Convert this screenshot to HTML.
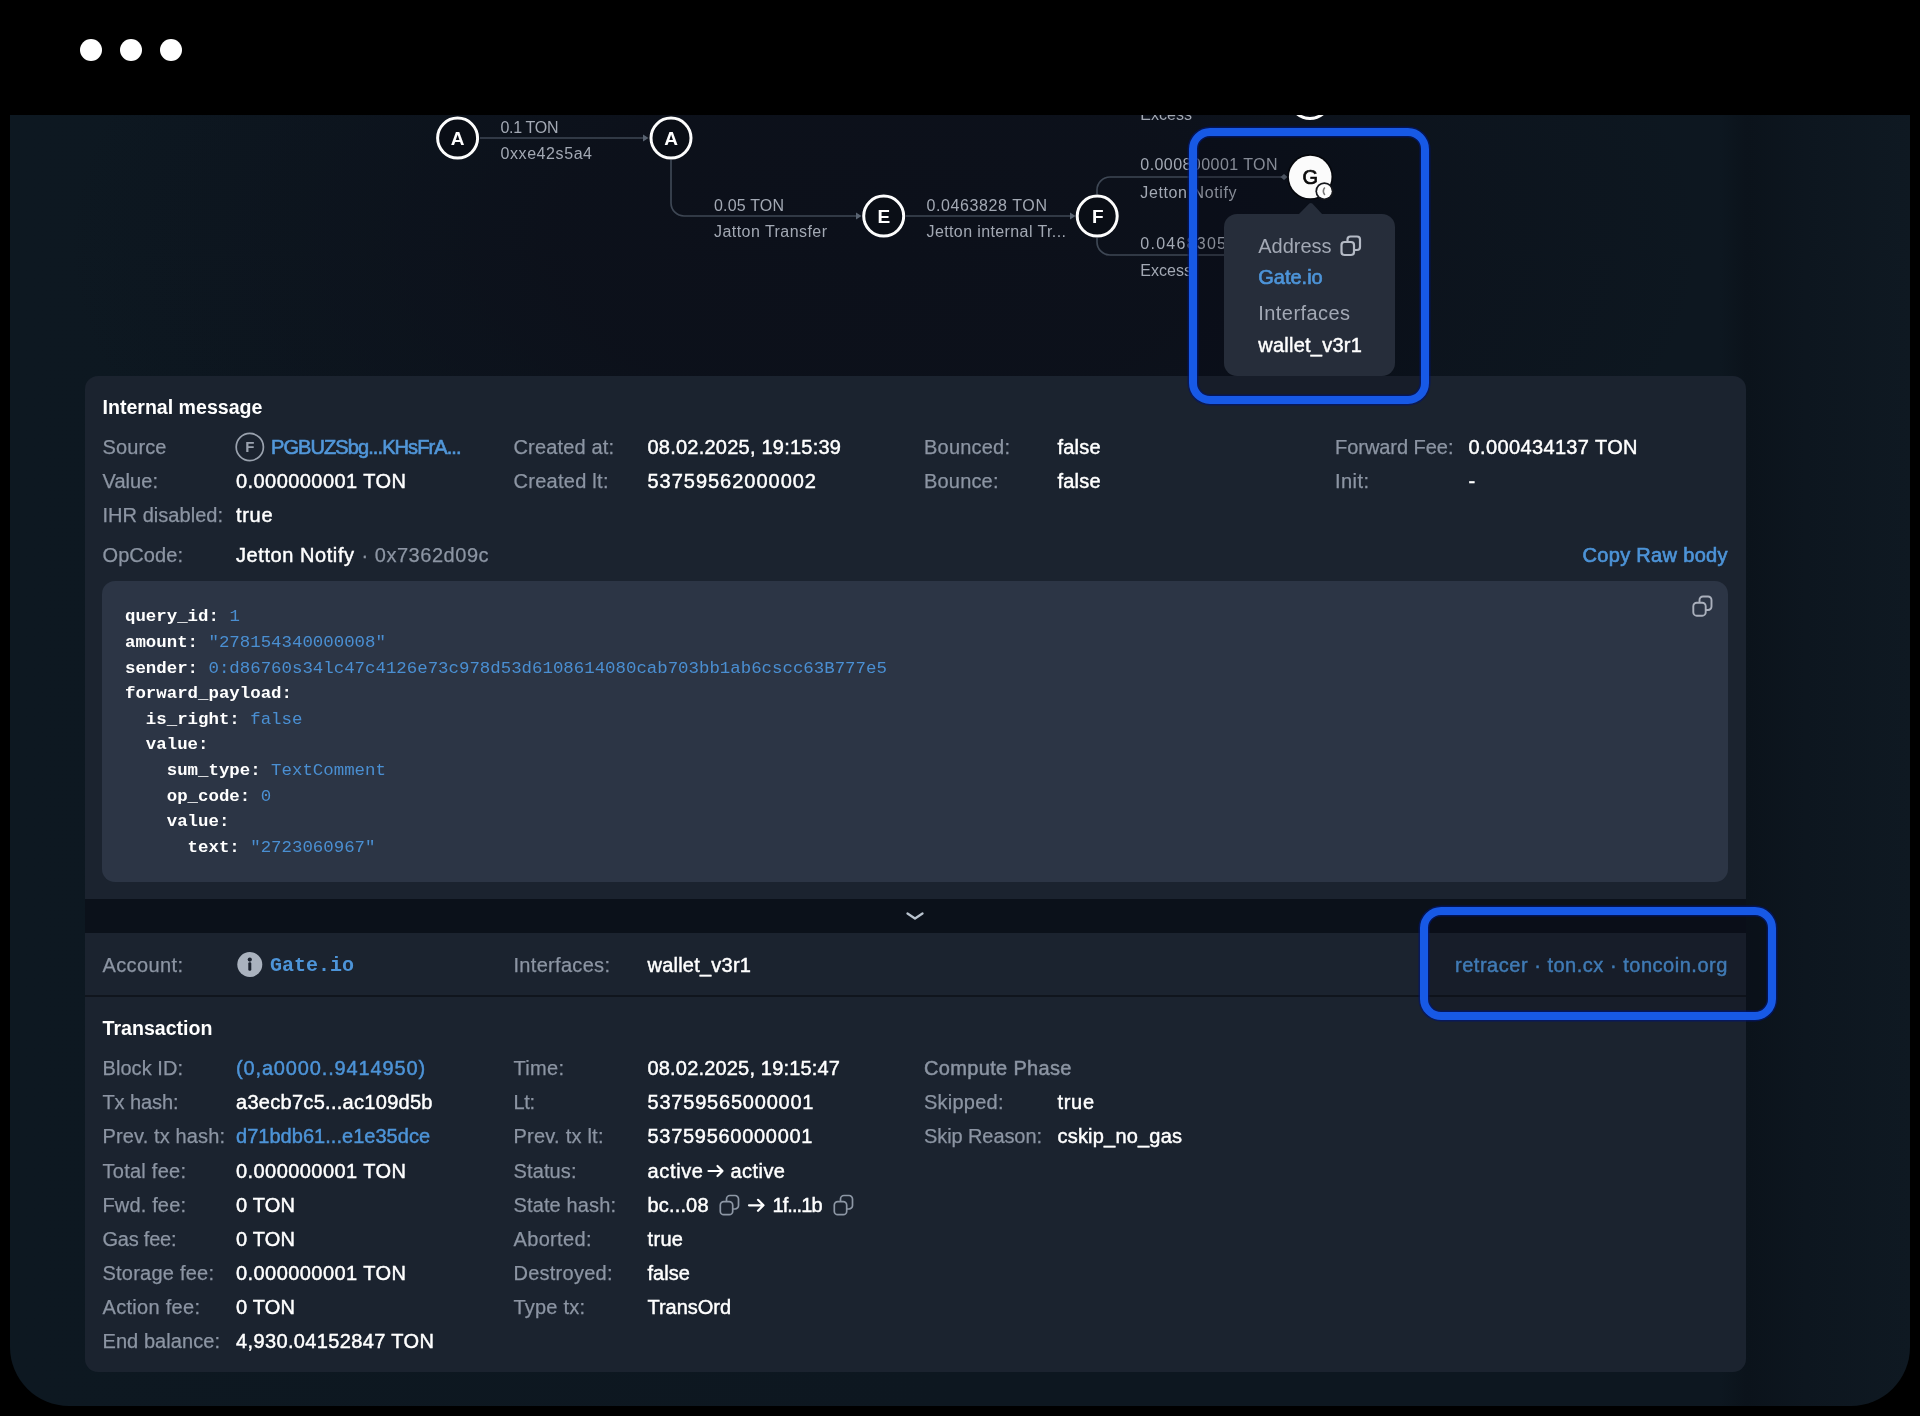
<!DOCTYPE html>
<html><head><meta charset="utf-8"><title>tx</title>
<style>
*{margin:0;padding:0;box-sizing:border-box}
html,body{width:1920px;height:1416px;background:#000;overflow:hidden}
body{position:relative;font-family:"Liberation Sans",sans-serif;color:#fff}
.abs{position:absolute}
#root{position:absolute;left:0;top:0;width:1920px;height:1416px;will-change:transform}
#frame{position:absolute;left:10px;top:115px;width:1900px;height:1291px;border-radius:0 0 59px 59px;overflow:hidden;
 background:
  radial-gradient(ellipse 820px 430px at 46% 10%, #0c101a 0%, rgba(12,16,26,.9) 40%, rgba(12,16,26,0) 100%),
  linear-gradient(90deg,#0d1821 0%,#0d1720 50%,#0d1720 90%,#0b131b 91.4%,#0d161f 94.5%,#0f1922 100%);}
.dot{position:absolute;width:22px;height:22px;border-radius:50%;background:#fff;top:39px}
.panel{position:absolute;left:85px;width:1661px;background:#1b232f}
#p1{top:376px;height:523px;border-radius:13px 13px 0 0}
#strip{position:absolute;left:85px;top:899px;width:1661px;height:34px;background:#0b111a}
#p2{top:933px;height:438.5px;border-radius:0 0 13px 13px}
#divider{position:absolute;left:85px;top:995px;width:1661px;height:2px;background:#10151d}
#code{position:absolute;left:102px;top:581px;width:1626px;height:301px;border-radius:13px;background:#2c3545}
.t{position:absolute;white-space:nowrap;font-size:20px;line-height:24px}
.l{color:#8c95a3;-webkit-text-stroke:.25px #8c95a3}
.v{color:#fff;-webkit-text-stroke:.45px #fff}
.b{color:#4d94d8;-webkit-text-stroke:.45px #4d94d8}
.bb{color:#4d94d8;-webkit-text-stroke:.65px #4d94d8}
.tl{color:#a3a9b5}
.h{font-weight:bold;font-size:19.6px}
.m{font-family:"Liberation Mono",monospace}
.g{position:absolute;white-space:nowrap;font-size:16px;line-height:20px;color:#a3a9b4}
.c{position:absolute;white-space:pre;font-family:"Liberation Mono",monospace;font-size:17.4px;line-height:25.6px;left:125px;font-weight:bold;color:#fff}
.c i{font-style:normal;font-weight:normal;color:#4a8fd2}
.hl{position:absolute;border:8px solid #1759e6;border-radius:21px;background:rgba(3,6,14,.18);box-shadow:0 0 0 1.5px rgba(0,22,110,.7),inset 0 0 0 1.5px rgba(0,22,110,.7)}
</style></head><body><div id="root">
<div class="dot" style="left:80px"></div><div class="dot" style="left:120px"></div><div class="dot" style="left:160px"></div>
<div id="frame"><div class="abs" style="left:-10px;top:-115px;width:1920px;height:1416px">
<svg class="abs" style="left:0;top:0" width="1920" height="1416" viewBox="0 0 1920 1416" fill="none">
 <g stroke="#3e4754" stroke-width="1.700" fill="none">
  <path d="M480 138H646"/>
  <path d="M671 160V203a13 13 0 0 0 13 13H859"/>
  <path d="M906 216H1073"/>
  <path d="M1097 194V190a13 13 0 0 1 13-13H1284"/>
  <path d="M1097 238V242a13 13 0 0 0 13 13H1300"/>
 </g>
 <g fill="#596371">
  <path d="M643 134.500l5.500 3.500-5.500 3.500z"/>
  <path d="M856 212.500l5.500 3.500-5.500 3.500z"/>
  <path d="M1070 212.500l5.500 3.500-5.500 3.500z"/>
  <path d="M1280.500 177l3.500-3 3.500 3-3.500 3z"/>
 </g>
 <g fill="#0a0e16" stroke="#fdfdfd" stroke-width="3">
  <circle cx="457.600" cy="138.100" r="20"/>
  <circle cx="671" cy="138.100" r="20"/>
  <circle cx="883.700" cy="216.100" r="20"/>
  <circle cx="1097.200" cy="216.100" r="20"/>
  <circle cx="1310" cy="98.500" r="20"/>
 </g>
 <g font-family="Liberation Sans, sans-serif" font-weight="bold" font-size="19" fill="#fff" text-anchor="middle">
  <text x="457.600" y="145.400">A</text><text x="671" y="145.400">A</text><text x="883.900" y="223">E</text><text x="1097.800" y="223">F</text>
 </g>
</svg>

<span class="g" style="left:500.5px;top:117.6px;letter-spacing:-0.32px;">0.1 TON</span>
<span class="g" style="left:500.5px;top:144.2px;letter-spacing:0.58px;">0xxe42s5a4</span>
<span class="g" style="left:714px;top:195.8px;letter-spacing:0.17px;">0.05 TON</span>
<span class="g" style="left:714px;top:222.3px;letter-spacing:0.45px;">Jatton Transfer</span>
<span class="g" style="left:926.5px;top:195.8px;letter-spacing:0.60px;">0.0463828 TON</span>
<span class="g" style="left:926.5px;top:222.3px;letter-spacing:0.39px;">Jetton internal Tr...</span>
<span class="g" style="left:1140.3px;top:105.1px;letter-spacing:0.02px;">Excess</span>
<span class="g" style="left:1140.3px;top:155.1px;letter-spacing:0.44px;">0.000800001 TON</span>
<span class="g" style="left:1140.3px;top:182.8px;letter-spacing:0.61px;">Jetton Notify</span>
<span class="g" style="left:1140.3px;top:234.0px;letter-spacing:1.26px;">0.0468305</span>
<span class="g" style="left:1140.3px;top:261.4px;letter-spacing:0.02px;">Excess</span>
</div></div>
<div class="panel" id="p1"></div><div id="strip"></div><div class="panel" id="p2"></div><div id="divider"></div><div id="code"></div>
<span class="t h" style="left:102.5px;top:395.0px;letter-spacing:-0.01px;">Internal message</span>
<span class="t l" style="left:102.5px;top:435.0px;letter-spacing:0.12px;">Source</span>
<span class="t bb" style="left:271px;top:435.0px;letter-spacing:-0.91px;font-size:20px;color:#5598d8">PGBUZSbg...KHsFrA...</span>
<span class="t l" style="left:513.5px;top:435.0px;letter-spacing:0.15px;">Created at:</span>
<span class="t v" style="left:647.5px;top:435.0px;letter-spacing:0.23px;">08.02.2025, 19:15:39</span>
<span class="t l" style="left:924px;top:435.0px;letter-spacing:0.21px;">Bounced:</span>
<span class="t v" style="left:1057.5px;top:435.0px;letter-spacing:0.19px;">false</span>
<span class="t l" style="left:1335px;top:435.0px;letter-spacing:-0.04px;">Forward Fee:</span>
<span class="t v" style="left:1468.5px;top:435.0px;letter-spacing:0.37px;">0.000434137 TON</span>
<span class="t l" style="left:102.5px;top:469.0px;letter-spacing:0.05px;">Value:</span>
<span class="t v" style="left:236px;top:469.0px;letter-spacing:0.44px;">0.000000001 TON</span>
<span class="t l" style="left:513.5px;top:469.0px;letter-spacing:0.27px;">Created lt:</span>
<span class="t v" style="left:647.5px;top:469.0px;letter-spacing:0.98px;">53759562000002</span>
<span class="t l" style="left:924px;top:469.0px;letter-spacing:0.18px;">Bounce:</span>
<span class="t v" style="left:1057.5px;top:469.0px;letter-spacing:0.19px;">false</span>
<span class="t l" style="left:1335px;top:469.0px;letter-spacing:0.44px;">Init:</span>
<span class="t v" style="left:1468.5px;top:469.0px;">-</span>
<span class="t l" style="left:102.5px;top:503.0px;letter-spacing:0.04px;">IHR disabled:</span>
<span class="t v" style="left:236px;top:503.0px;letter-spacing:0.68px;">true</span>
<span class="t l" style="left:102.5px;top:542.7px;letter-spacing:0.07px;">OpCode:</span>
<span class="t v" style="left:236px;top:542.7px;letter-spacing:0.57px;">Jetton Notify</span>
<span class="t l" style="left:361.5px;top:542.7px;letter-spacing:0.53px;">· 0x7362d09c</span>
<span class="t bb" style="left:1582.5px;top:542.7px;letter-spacing:0.32px;">Copy Raw body</span>
<span class="t l" style="left:102.5px;top:953.0px;letter-spacing:0.38px;">Account:</span>
<span class="t m" style="left:270px;top:954.0px;letter-spacing:-0.00px;font-size:20px;font-weight:bold;color:#4d94d8">Gate.io</span>
<span class="t l" style="left:513.5px;top:953.0px;letter-spacing:0.31px;">Interfaces:</span>
<span class="t v" style="left:647.5px;top:953.0px;letter-spacing:0.23px;">wallet_v3r1</span>
<span class="t b" style="left:1455px;top:953.0px;letter-spacing:0.52px;">retracer · ton.cx · toncoin.org</span>
<span class="t h" style="left:102.5px;top:1016.4px;letter-spacing:0.00px;">Transaction</span>
<span class="t l" style="left:102.5px;top:1056.0px;letter-spacing:0.06px;">Block ID:</span>
<span class="t b" style="left:236px;top:1056.0px;letter-spacing:0.85px;">(0,a0000..9414950)</span>
<span class="t l" style="left:102.5px;top:1090.2px;letter-spacing:-0.10px;">Tx hash:</span>
<span class="t v" style="left:236px;top:1090.2px;letter-spacing:0.29px;">a3ecb7c5...ac109d5b</span>
<span class="t l" style="left:102.5px;top:1124.3px;letter-spacing:0.13px;">Prev. tx hash:</span>
<span class="t b" style="left:236px;top:1124.3px;letter-spacing:0.03px;">d71bdb61...e1e35dce</span>
<span class="t l" style="left:102.5px;top:1158.5px;letter-spacing:0.26px;">Total fee:</span>
<span class="t v" style="left:236px;top:1158.5px;letter-spacing:0.44px;">0.000000001 TON</span>
<span class="t l" style="left:102.5px;top:1192.6px;letter-spacing:0.15px;">Fwd. fee:</span>
<span class="t v" style="left:236px;top:1192.6px;letter-spacing:0.20px;">0 TON</span>
<span class="t l" style="left:102.5px;top:1226.8px;letter-spacing:-0.23px;">Gas fee:</span>
<span class="t v" style="left:236px;top:1226.8px;letter-spacing:0.20px;">0 TON</span>
<span class="t l" style="left:102.5px;top:1260.9px;letter-spacing:0.23px;">Storage fee:</span>
<span class="t v" style="left:236px;top:1260.9px;letter-spacing:0.44px;">0.000000001 TON</span>
<span class="t l" style="left:102.5px;top:1295.0px;letter-spacing:0.30px;">Action fee:</span>
<span class="t v" style="left:236px;top:1295.0px;letter-spacing:0.20px;">0 TON</span>
<span class="t l" style="left:102.5px;top:1329.2px;letter-spacing:0.07px;">End balance:</span>
<span class="t v" style="left:236px;top:1329.2px;letter-spacing:0.37px;">4,930.04152847 TON</span>
<span class="t l" style="left:513.5px;top:1056.0px;letter-spacing:0.31px;">Time:</span>
<span class="t v" style="left:647.5px;top:1056.0px;letter-spacing:0.18px;">08.02.2025, 19:15:47</span>
<span class="t l" style="left:513.5px;top:1090.2px;letter-spacing:-0.38px;">Lt:</span>
<span class="t v" style="left:647.5px;top:1090.2px;letter-spacing:0.79px;">53759565000001</span>
<span class="t l" style="left:513.5px;top:1124.3px;letter-spacing:0.23px;">Prev. tx lt:</span>
<span class="t v" style="left:647.5px;top:1124.3px;letter-spacing:0.71px;">53759560000001</span>
<span class="t l" style="left:513.5px;top:1158.5px;letter-spacing:0.12px;">Status:</span>
<span class="t v" style="left:647.5px;top:1158.5px;letter-spacing:0.65px;">active</span>
<span class="t l" style="left:513.5px;top:1192.6px;letter-spacing:0.13px;">State hash:</span>
<span class="t v" style="left:647.5px;top:1192.6px;letter-spacing:0.16px;">bc...08</span>
<span class="t l" style="left:513.5px;top:1226.8px;letter-spacing:0.34px;">Aborted:</span>
<span class="t v" style="left:647.5px;top:1226.8px;letter-spacing:0.34px;">true</span>
<span class="t l" style="left:513.5px;top:1260.9px;letter-spacing:0.25px;">Destroyed:</span>
<span class="t v" style="left:647.5px;top:1260.9px;letter-spacing:0.06px;">false</span>
<span class="t l" style="left:513.5px;top:1295.0px;letter-spacing:0.21px;">Type tx:</span>
<span class="t v" style="left:647.5px;top:1295.0px;letter-spacing:-0.03px;">TransOrd</span>
<span class="t v" style="left:730.5px;top:1158.5px;letter-spacing:0.45px;">active</span>
<span class="t v" style="left:772.5px;top:1192.6px;letter-spacing:-0.93px;">1f...1b</span>
<span class="t l" style="left:924px;top:1056.0px;letter-spacing:0.34px;-webkit-text-stroke:.5px #8a93a1">Compute Phase</span>
<span class="t l" style="left:924px;top:1090.2px;letter-spacing:0.24px;">Skipped:</span>
<span class="t v" style="left:1057.5px;top:1090.2px;letter-spacing:0.68px;">true</span>
<span class="t l" style="left:924px;top:1124.3px;letter-spacing:-0.09px;">Skip Reason:</span>
<span class="t v" style="left:1057.5px;top:1124.3px;letter-spacing:0.20px;">cskip_no_gas</span>
<div class="c" style="top:604.3px">query_id: <i>1</i></div>
<div class="c" style="top:629.9px">amount: <i>"278154340000008"</i></div>
<div class="c" style="top:655.5px">sender: <i>0:d86760s34lc47c4126e73c978d53d6108614080cab703bb1ab6cscc63B777e5</i></div>
<div class="c" style="top:681.1px">forward_payload:</div>
<div class="c" style="top:706.7px">  is_right: <i>false</i></div>
<div class="c" style="top:732.3px">  value:</div>
<div class="c" style="top:757.9px">    sum_type: <i>TextComment</i></div>
<div class="c" style="top:783.5px">    op_code: <i>0</i></div>
<div class="c" style="top:809.1px">    value:</div>
<div class="c" style="top:834.7px">      text: <i>"2723060967"</i></div>
<svg class="abs" style="left:0;top:0;pointer-events:none" width="1920" height="1416" viewBox="0 0 1920 1416" fill="none">
 <circle cx="249.800" cy="447" r="13.600" stroke="#9aa2ae" stroke-width="1.700"/>
 <text x="249.800" y="452.400" font-family="Liberation Sans, sans-serif" font-weight="bold" font-size="15" fill="#9aa2ae" text-anchor="middle">F</text>
 <circle cx="249.800" cy="964.500" r="12.500" fill="#aab2be"/>
 <circle cx="249.800" cy="959.600" r="2.100" fill="#1b222e"/><rect x="248.300" y="962.300" width="3" height="8.400" rx="1.200" fill="#1b222e"/>
 <path d="M907.500 913.500l7.500 5 7.500-5" stroke="#b9c3ce" stroke-width="2.300" stroke-linecap="round" stroke-linejoin="round"/>
 <g stroke="#aab0bc" stroke-width="1.900" stroke-linejoin="round">
  <rect x="1693.300" y="602.700" width="12.400" height="13" rx="3.500"/><path d="M1699.500 602V600a3.500 3.500 0 0 1 3.500-3.500H1708a3.500 3.500 0 0 1 3.500 3.500V606.500a3.500 3.500 0 0 1-3.500 3.500H1706"/>
 </g>
 <g stroke="#8d97a5" stroke-width="1.700" stroke-linejoin="round">
  <rect x="720.300" y="1201.700" width="12.400" height="13" rx="3.500"/><path d="M726.500 1201V1199a3.500 3.500 0 0 1 3.500-3.500H735a3.500 3.500 0 0 1 3.500 3.500V1205.500a3.500 3.500 0 0 1-3.500 3.500H733"/>
  <rect x="834.300" y="1201.700" width="12.400" height="13" rx="3.500"/><path d="M840.500 1201V1199a3.500 3.500 0 0 1 3.500-3.500H849a3.500 3.500 0 0 1 3.500 3.500V1205.500a3.500 3.500 0 0 1-3.500 3.500H847"/>
 </g>
 <path d="M749 1205.300h14.500m-5.500-5.500 5.500 5.500-5.500 5.500" stroke="#fff" stroke-width="2.200" stroke-linecap="round" stroke-linejoin="round"/>
 <path d="M708.500 1171h14m-5-5 5 5-5 5" stroke="#fff" stroke-width="2.200" stroke-linecap="round" stroke-linejoin="round"/>
</svg>

<div class="hl" style="left:1189.4px;top:128px;width:239.6px;height:276px"></div>
<div class="hl" style="left:1420px;top:907px;width:355.5px;height:113px"></div>
<svg class="abs" style="left:0;top:0;pointer-events:none" width="1920" height="1416" viewBox="0 0 1920 1416" fill="none">
 <circle cx="1310.200" cy="177" r="23" fill="#05070c"/>
 <circle cx="1310.200" cy="177" r="21.300" fill="#fbfbfb"/>
 <circle cx="1324.400" cy="191.200" r="9" fill="#15171c"/>
 <circle cx="1324.400" cy="191.200" r="7.300" fill="#fdfdfd"/>
 <path d="M1324.800 187.500q-3 3.700 0 7.400" stroke="#777" stroke-width="1.600" fill="none"/>
 <text x="1310.200" y="184.200" font-family="Liberation Sans, sans-serif" font-weight="normal" font-size="20" fill="#0a0a0a" stroke="#0a0a0a" stroke-width=".7" text-anchor="middle">G</text>
</svg>
<div class="abs" style="left:1224px;top:214px;width:171px;height:162px;border-radius:13px;background:#262d3a"></div>
<svg class="abs" style="left:1296px;top:200px" width="30" height="16" viewBox="0 0 30 16"><path d="M2 15 L13.300 3.600 Q14.800 2.200 16.300 3.600 L27 15Z" fill="#262d3a"/></svg>
<svg class="abs" style="left:1339px;top:234px" width="24" height="24" viewBox="0 0 24 24" fill="none" stroke="#b4bac5" stroke-width="2.200" stroke-linejoin="round"><rect x="2.500" y="8" width="12.500" height="13" rx="3"/><path d="M8.500 8V5.500a3 3 0 0 1 3-3H18a3 3 0 0 1 3 3V13a3 3 0 0 1-3 3h-3"/></svg>
<span class="t tl" style="left:1258.3px;top:233.5px;letter-spacing:-0.03px;">Address</span>
<span class="t bb" style="left:1258.3px;top:265.2px;letter-spacing:-0.01px;">Gate.io</span>
<span class="t tl" style="left:1258.3px;top:301.3px;letter-spacing:0.43px;">Interfaces</span>
<span class="t v" style="left:1258.3px;top:333.0px;letter-spacing:0.23px;">wallet_v3r1</span>
</div></body></html>
